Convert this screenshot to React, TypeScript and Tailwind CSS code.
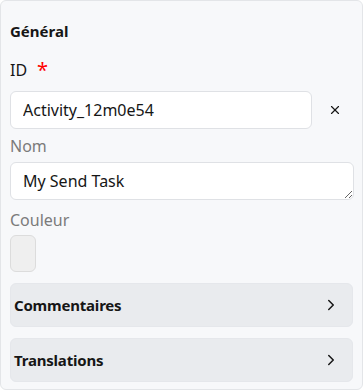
import { ChevronRight, X } from "lucide-react";

const font = { fontFamily: '"Noto Sans", "Open Sans", sans-serif' };

function Section({ title }: { title: string }) {
  return (
    <button
      type="button"
      className="flex h-[44px] w-full items-center justify-between rounded-md border border-[#e5e7eb] bg-[#e9ebee] pl-[3px] pr-[12px] text-left text-[15px] font-bold tracking-[-0.2px] text-[#161616]"
    >
      <span>{title}</span>
      <ChevronRight size={18} strokeWidth={2} className="text-[#161616]" />
    </button>
  );
}

export default function App() {
  return (
    <div className="h-[391px] w-[363px] bg-white" style={font}>
      <div className="flex h-[390px] w-[363px] flex-col rounded-md border border-[#e3e5e8] bg-[#f7f8fa] px-[9px]">
        <h2 className="mt-[19px] text-[15px] font-bold leading-[22px] text-[#161616]">Général</h2>

        <label className="mt-[17px] flex items-center text-[16px] leading-[22px] text-[#161616]">
          ID
          <span className="ml-[10px] text-[20px] leading-[22px] text-[#ff0000]">*</span>
        </label>
        <div className="mt-[10px] flex items-center">
          <input
            defaultValue="Activity_12m0e54"
            className="h-[38px] w-[302px] rounded-md border border-[#dfe1e5] bg-white px-[12px] text-[16px] text-[#161616] outline-none"
          />
          <X size={14} strokeWidth={2} className="ml-[16px] text-[#161616]" />
        </div>

        <label className="mt-[6px] text-[16px] leading-[22px] text-[#7b7b7b]">Nom</label>
        <textarea
          defaultValue="My Send Task"
          rows={1}
          className="mt-[5px] h-[38px] w-[344px] rounded-md border border-[#dfe1e5] bg-white px-[12px] py-[6px] text-[16px] leading-[24px] text-[#161616] outline-none"
        />

        <label className="mt-[9px] text-[16px] leading-[22px] text-[#7b7b7b]">Couleur</label>
        <div className="mt-[4px] h-[37px] w-[26px] rounded-md border border-[#dcdcdc] bg-[#efefef]" />

        <div className="mt-[11px] flex flex-col gap-[11px]">
          <Section title="Commentaires" />
          <Section title="Translations" />
        </div>
      </div>
    </div>
  );
}
